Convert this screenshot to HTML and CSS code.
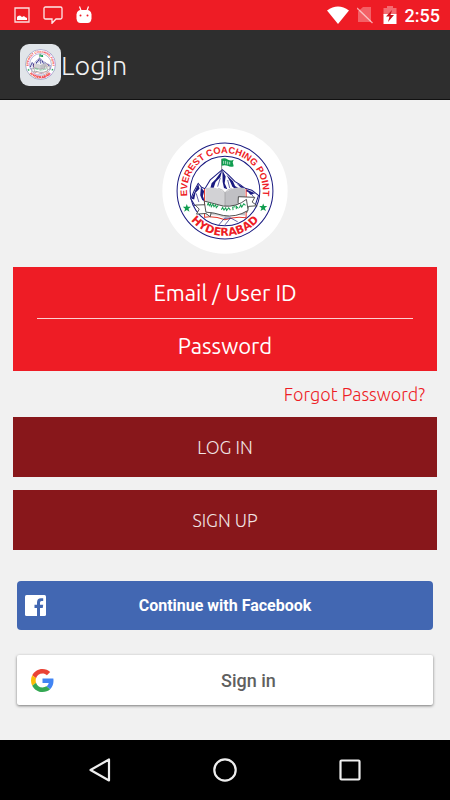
FILE: index.html
```
<!DOCTYPE html>
<html lang="en">
<head>
    <meta charset="UTF-8">
    <meta name="viewport" content="width=device-width, initial-scale=1.0">
    <title>Login</title>
    <link rel="stylesheet" href="styles.css">
</head>
<body>
    <div class="status-bar">
        <div class="status-group">
            <svg width="16" height="16" viewBox="0 0 16 16">
                <path d="M1 1h14v14H1z" fill="none" stroke="#fff" stroke-opacity=".85" stroke-width="1.3"/>
                <path d="M3 13v-3l1-1 2-.5 2 1.500 2-1 1 1 2 1v2z" fill="#fff"/>
            </svg>
            <svg width="20" height="18" viewBox="0 0 20 18">
                <path d="M2.500 1h15q1.500 0 1.500 1.500v9q0 1.500-1.500 1.500H13l-4 4.300V13H2.500Q1 13 1 11.500v-9Q1 1 2.500 1z" fill="none" stroke="#fff" stroke-opacity=".9" stroke-width="1.300"/>
            </svg>
            <svg width="16" height="18" viewBox="0 0 16 18">
                <path d="M3.500.5l1.500 4M12.500.5l-1.500 4" stroke="#fff" stroke-width="1.200"/>
                <path d="M.5 8.500Q1 4 5 4h6q4 0 4.500 4.500v4q-.5 4.500-4 4.500h-7q-3.500 0-4-4.500z" fill="#fff"/>
                <circle cx="4.500" cy="9.500" r="1" fill="#ee1c25"/>
                <circle cx="11.500" cy="9.500" r="1" fill="#ee1c25"/>
            </svg>
        </div>
        <div class="status-group status-right">
            <svg width="22" height="18" viewBox="0 0 22 18">
                <path d="M0 4.500Q11-3.500 22 4.500L11 18z" fill="#fff"/>
            </svg>
            <svg width="16" height="18" viewBox="0 0 16 18">
                <path d="M6 1h8v15H1V5.500z" fill="#fff" opacity=".3"/>
                <path d="M0 2l15.500 15" stroke="#fff" stroke-width="1.300" opacity=".6"/>
            </svg>
            <svg width="14" height="18" viewBox="0 0 14 18">
                <path d="M.5 2h3.500V0h6v2h3.500v7H.5z" fill="#fff" opacity=".35"/>
                <path d="M.5 8h13v10H.5z" fill="#fff"/>
                <path d="M9 4l-6 6.500h3.500L5 16l6-7H7.500z" fill="#c8101a"/>
            </svg>
            <span class="clock">2:55</span>
        </div>
    </div>

    <header class="header">
        <span class="app-icon">
            <svg width="31" height="31" viewBox="62 51 296 296"><use href="#crest"/></svg>
        </span>
        <h1>Login</h1>
    </header>

    <main class="content">
        <svg class="logo" width="126" height="126" viewBox="22 11 376 376">
            <defs>
                <path id="arc-top" d="M97 199A113 113 0 1 1 323 199A113 113 0 1 1 97 199" transform="rotate(-90 210 199)"/>
                <path id="arc-bottom" d="M76 199A134 134 0 0 0 344 199"/>
                <g id="crest">
                    <circle cx="210" cy="199" r="143" fill="#fff" stroke="#1a1a80" stroke-width="3"/>
                    <circle cx="210" cy="199" r="104" fill="#fff" stroke="#1a1a80" stroke-width="3"/>
                    <text class="crest-top"><textPath href="#arc-top" startOffset="50%">EVEREST COACHING POINT</textPath></text>
                    <text class="crest-bottom"><textPath href="#arc-bottom" startOffset="50%">HYDERABAD</textPath></text>
                    <path d="M96 238l3 8h9l-7 6 3 9-8-5-8 5 3-9-7-6h9zM324 236l3 8h9l-7 6 3 9-8-5-8 5 3-9-7-6h9z" fill="#0f9d4e"/>
                    <!-- mountains -->
                    <path d="M108 222l10-24 12-22 10 12 10 4 16-26 14-12 22-19 18 16 20 20 14 8 16 12 20 6 20 15-10 30H120z" fill="#fff" stroke="#1a1a80" stroke-width="3"/>
                    <path d="M202 136l-6 22-14 14-6 18-12 10 6-24 12-12zM202 136l10 20-3 20 8 18-10-4-4-18zM214 150l20 20 6 14 16 10-8 4-16-12-6-14zM244 176l22 12 14 14-12-2-12-12zM130 178l4 14-12 12-4 20-8-2zM138 188l10 12-4 14 6 16-8-4-6-14zM272 194l28 12-14 4z" fill="#1a1a80"/>
                    <path d="M196 160l-8 26M218 166l6 24M154 196l-4 30M124 206l8 26M286 204l10 14" fill="none" stroke="#1a1a80" stroke-width="2"/>
                    <!-- flag -->
                    <path d="M200 103v34" stroke="#555" stroke-width="2"/>
                    <path d="M200 103q9-5 18 2 9 5 18 1l-3 7 3 12q-9 4-18-1-9-4-18 0z" fill="#0f9d4e"/>
                    <path d="M206 109v9M212 109v10M218 111v9M224 112v8" stroke="#fff" stroke-width="2"/>
                    <!-- book -->
                    <path d="M149 193v84q30-4 61 8 31-12 63-6v-86" fill="#fff" stroke="#e5352b" stroke-width="3"/>
                    <path d="M152 190q33-6 58 14v76q-26-13-58-8z" fill="#d2d2d5"/>
                    <path d="M270 190q-34-6-60 14v76q27-13 60-8z" fill="#c0c0c4"/>
                    <path d="M190 191q14 4 20 13v60M230 191q-14 4-20 13" fill="none" stroke="#96969b" stroke-width="2"/>
                    <path d="M190 302l18-21 18-2 22 12M210 300l16-20" fill="none" stroke="#1a1a80" stroke-width="2"/>
                    <!-- ribbon -->
                    <path d="M149 240l-28 1 12 12-8 15 28-2 13 10 3-15zM249 233l1-17 49 2-8 14 15 11-26 2-5 18z" fill="#fff" stroke="#333" stroke-width="2.500"/>
                    <path d="M148 229q30 8 57 15 39 4 69-20l5 33q-37 22-74 15-29-9-52-10z" fill="#fff" stroke="#333" stroke-width="2.500"/>
                    <path d="M157 242l3-7 3 8 4-6 2 9 5-8 3 8 5-6 2 9 6-7M199 255l4-7 4 8 5-7 3 8 6-8 5 7M234 256l-1-9 7-1M244 253l-1-9 7 7M253 249l4-9 3 7 6-10 5 5" fill="none" stroke="#0f9d4e" stroke-width="3"/>
                </g>
            </defs>
            <circle cx="210" cy="199" r="187" fill="#fff"/>
            <use href="#crest"/>
        </svg>

        <form class="login-form">
            <div class="fields">
                <input type="text" aria-label="Email / User ID" placeholder="Email / User ID">
                <input type="password" aria-label="Password" placeholder="Password">
            </div>
            <a class="forgot" href="#">Forgot Password?</a>
            <button type="submit" class="btn">LOG IN</button>
            <button type="button" class="btn">SIGN UP</button>
        </form>

        <div class="social">
            <button type="button" class="social-btn facebook">
                <svg width="21" height="21" viewBox="0 0 21 21">
                    <rect width="21" height="21" rx="1.500" fill="#fff"/>
                    <path d="M12 21v-8H9.500v-3.200H12V7.500Q12 3.200 16 3.200h2.200V6H16.500Q15 6 15 7.600v2.200h3.200l-.5 3.200H15v8z" fill="#4267b2"/>
                </svg>
                <span>Continue with Facebook</span>
            </button>
            <button type="button" class="social-btn google">
                <svg width="23" height="23" viewBox="0 0 48 48">
                    <path fill="#ea4335" d="M24 9.500c3.540 0 6.710 1.220 9.210 3.600l6.850-6.850C35.900 2.380 30.470 0 24 0 14.620 0 6.510 5.380 2.560 13.220l7.980 6.190C12.430 13.720 17.740 9.500 24 9.500z"/>
                    <path fill="#4285f4" d="M46.980 24.550c0-1.570-.15-3.090-.38-4.550H24v9.020h12.940c-.58 2.960-2.260 5.480-4.780 7.180l7.730 6c4.510-4.180 7.090-10.360 7.090-17.650z"/>
                    <path fill="#fbbc05" d="M10.530 28.590c-.48-1.450-.76-2.990-.76-4.590s.27-3.140.76-4.590l-7.980-6.190C.92 16.460 0 20.120 0 24s.92 7.540 2.560 10.780z"/>
                    <path fill="#34a853" d="M24 48c6.480 0 11.930-2.130 15.890-5.810l-7.730-6c-2.150 1.450-4.920 2.300-8.160 2.300-6.260 0-11.570-4.220-13.470-9.910l-7.980 6.190C6.510 42.620 14.620 48 24 48z"/>
                </svg>
                <span>Sign in</span>
            </button>
        </div>
    </main>

    <nav class="nav-bar">
        <button type="button" aria-label="Back">
            <svg width="24" height="24" viewBox="0 0 24 24"><path d="M21 1.500v21L2.500 12z" fill="none" stroke="#eee" stroke-width="2.200" stroke-linejoin="round"/></svg>
        </button>
        <button type="button" aria-label="Home">
            <svg width="24" height="24" viewBox="0 0 24 24"><circle cx="12" cy="12" r="10.700" fill="none" stroke="#eee" stroke-width="2.200"/></svg>
        </button>
        <button type="button" aria-label="Recent apps">
            <svg width="24" height="24" viewBox="0 0 24 24"><rect x="2.500" y="2.500" width="19" height="19" rx="1" fill="none" stroke="#eee" stroke-width="2.200"/></svg>
        </button>
    </nav>
</body>
</html>
```
FILE: styles.css
```
* {
    box-sizing: border-box;
}

body {
    margin: 0;
    min-height: 100vh;
    display: flex;
    flex-direction: column;
    background-color: #f1f1f1;
    font-family: Ubuntu, 'Open Sans', 'Noto Sans', sans-serif;
    font-weight: 300;
}

button {
    border: none;
    cursor: pointer;
    font-family: inherit;
}

svg {
    display: block;
    flex-shrink: 0;
}

.status-bar {
    display: flex;
    justify-content: space-between;
    align-items: center;
    height: 30px;
    padding: 0 10px 0 14px;
    background-color: #ee1c25;
}

.status-group {
    display: flex;
    align-items: center;
    gap: 13px;
}

.status-right {
    gap: 8px;
}

.status-right svg:nth-child(2) {
    margin-right: 2px;
}

.clock {
    color: white;
    font-family: Roboto, sans-serif;
    font-size: 18px;
    font-weight: 500;
}

.header {
    display: flex;
    align-items: center;
    height: 70px;
    padding-left: 20px;
    background-color: #2e2e2e;
    border-bottom: 1px solid #111;
}

.app-icon {
    display: flex;
    align-items: center;
    justify-content: center;
    width: 41px;
    height: 42px;
    border-radius: 9px;
    background-color: #e1e5e9;
}

h1 {
    margin: 0;
    color: #f1f1f1;
    font-size: 27px;
    font-weight: 300;
}

.content {
    flex: 1;
    padding: 28px 13px 32px;
}

.logo {
    margin: 0 auto 13px;
}

.crest-top {
    fill: #ee1c25;
    font-family: 'Liberation Sans', sans-serif;
    font-size: 28px;
    font-weight: 700;
    text-anchor: middle;
}

.crest-bottom {
    fill: #ee1c25;
    font-family: 'DejaVu Sans', sans-serif;
    font-size: 33px;
    font-weight: 700;
    text-anchor: middle;
}

.login-form {
    display: flex;
    flex-direction: column;
    gap: 13px;
}

.fields {
    display: flex;
    flex-direction: column;
    padding: 0 24px;
    background-color: #ee1c25;
}

.fields input {
    width: 100%;
    height: 52px;
    padding: 0;
    border: none;
    outline: none;
    background: none;
    color: white;
    font-family: inherit;
    font-size: 22px;
    font-weight: 400;
    text-align: center;
}

.fields input:first-child {
    border-bottom: 1px solid #fbd0d2;
}

.fields input::placeholder {
    color: white;
    opacity: 1;
}

.forgot {
    align-self: flex-end;
    margin-right: 12px;
    color: #ee1c25;
    font-size: 18px;
    line-height: 20px;
    text-decoration: none;
}

.btn {
    height: 60px;
    background-color: #88171b;
    color: #f1e4e4;
    font-size: 18px;
    font-weight: 300;
}

.social {
    display: flex;
    flex-direction: column;
    gap: 25px;
    padding: 31px 4px 0;
}

.social-btn {
    display: flex;
    align-items: center;
    height: 49px;
    padding: 0 8px;
    border-radius: 4px;
    font-family: Roboto, sans-serif;
    font-size: 16px;
    font-weight: 700;
}

.social-btn span {
    flex: 1;
    text-align: center;
}

.facebook {
    background-color: #4267b2;
    color: white;
}

.facebook span {
    padding-right: 21px;
}

.google {
    height: 50px;
    padding-left: 14px;
    border-radius: 2px;
    background-color: white;
    box-shadow: 0 1px 3px rgba(0, 0, 0, 0.5);
    color: #5f5f5f;
    font-size: 18px;
    font-weight: 500;
}

.google span {
    padding-left: 18px;
}

.nav-bar {
    display: flex;
    justify-content: center;
    height: 60px;
    padding: 0 37px;
    background-color: black;
}

.nav-bar button {
    flex: 1;
    display: flex;
    align-items: center;
    justify-content: center;
    padding: 0;
    background: none;
}
```
